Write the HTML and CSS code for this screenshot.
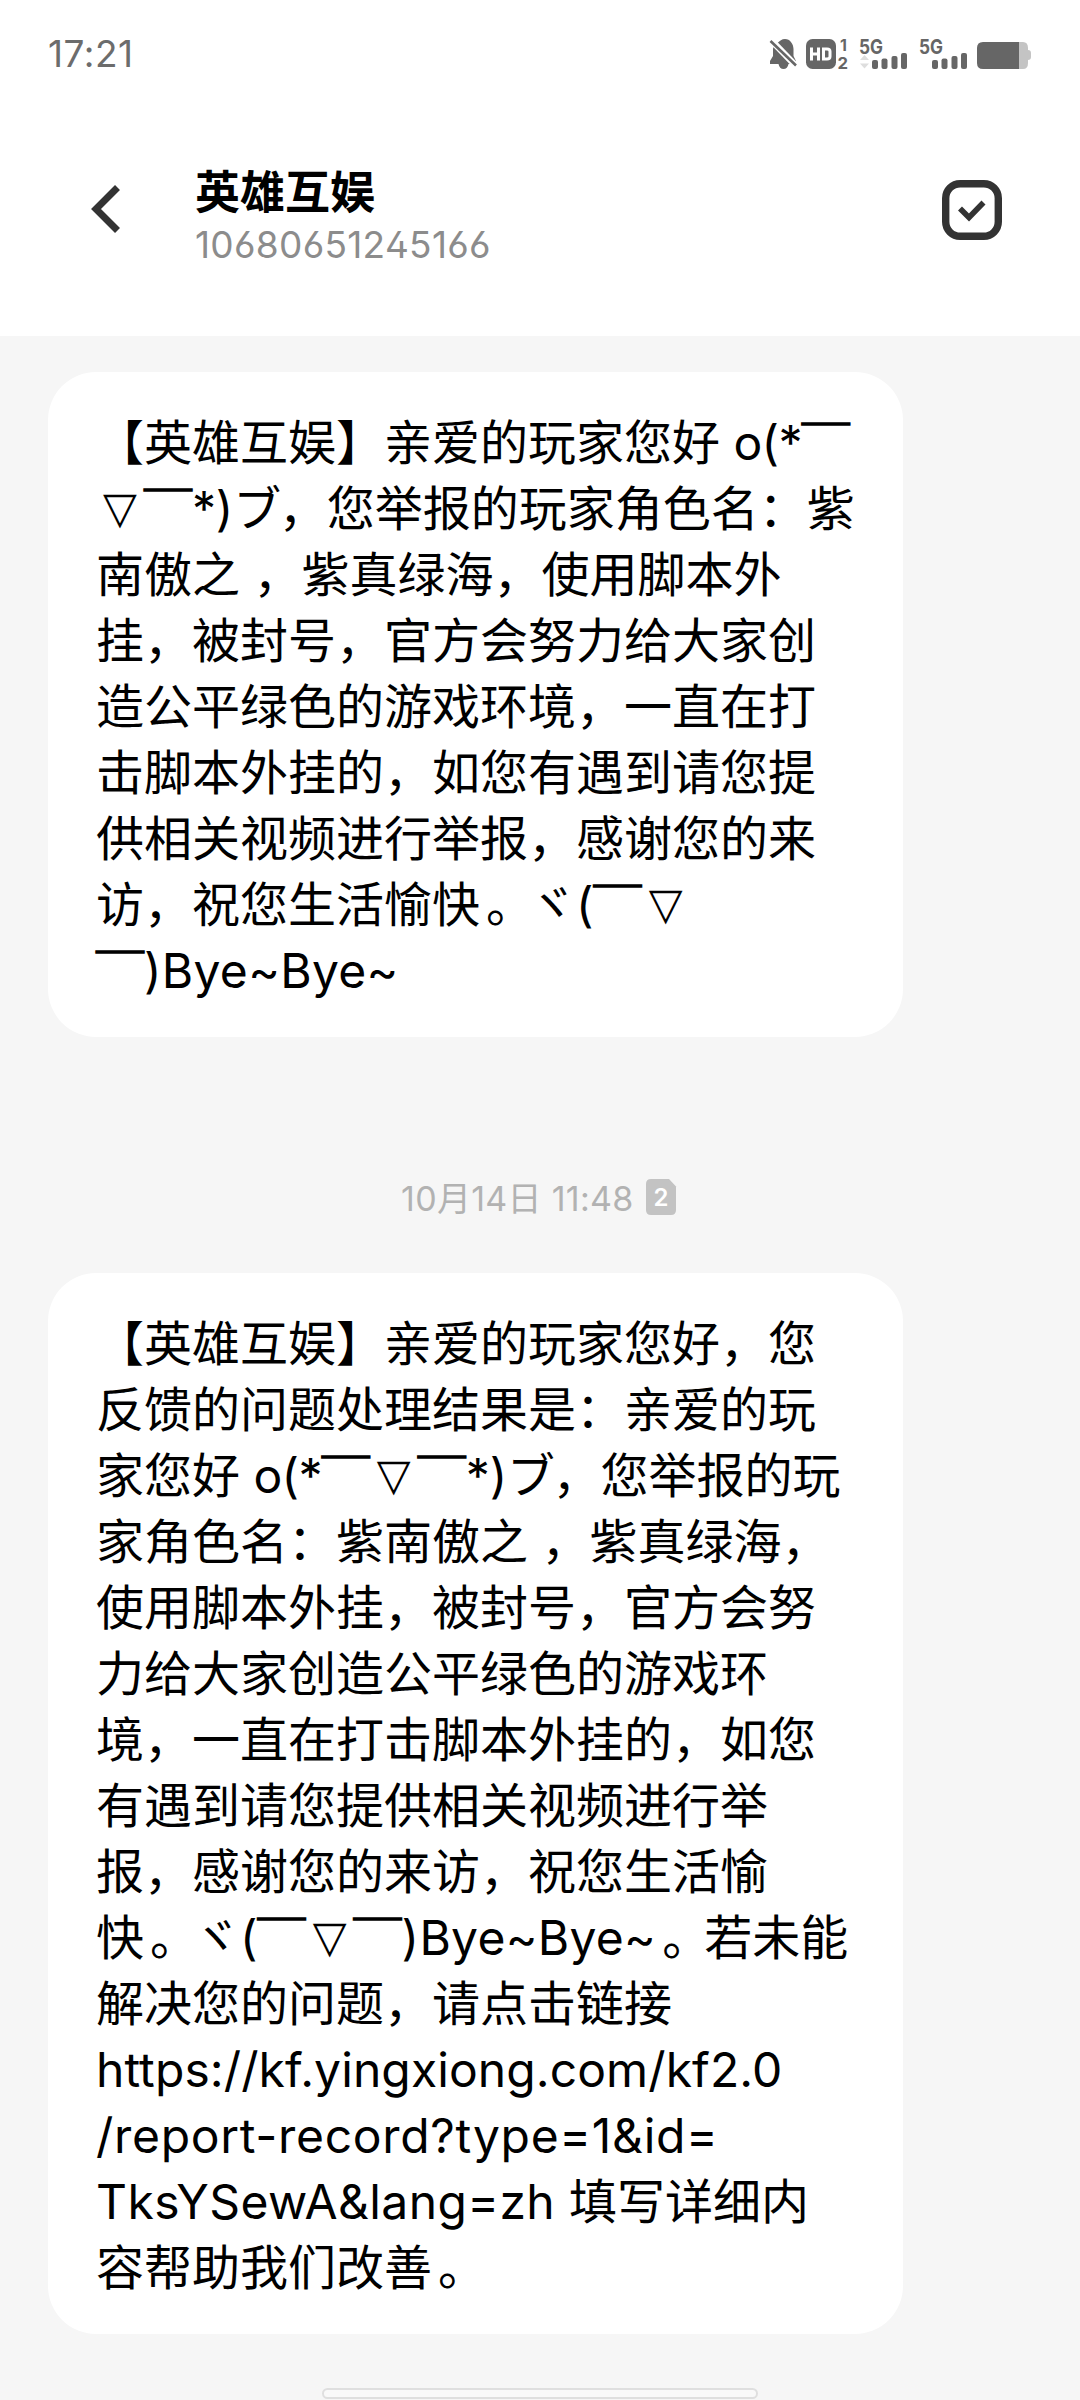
FILE: index.html
```html
<!DOCTYPE html>
<html lang="zh-CN">
<head>
<meta charset="utf-8">
<title>英雄互娱</title>
<link rel="stylesheet" href="styles.css">
</head>
<body>
<div class="screen">
  <header class="top">
    <div class="status">
      <span class="clock">17:21</span>
      <svg class="status-icons" width="264" height="34" viewBox="0 0 264 34">
        <g fill="#666">
          <path d="M7 7.500C10 4 13 2 16 2C21 2 24.500 7 24.500 12V19L27 24V27H19.500C19 30 17 32 14.500 32C12 32 10 30 9.500 27H1V24L4 19V12C4 10.500 5 9 7 7.500Z"/>
          <path d="M1 2L28 30" stroke="#fff" stroke-width="6.500"/>
          <path d="M1.500 4L27 28.500" stroke="#666" stroke-width="2.600"/>
          <rect x="37" y="2" width="30" height="30" rx="6.500"/>
          <path d="M42.500 10.500V23.500M42.500 17H49.500M49.500 10.500V23.500M54.500 12H58Q61 12 61 14.500V19.500Q61 22 58 22H54.500Z" fill="none" stroke="#fff" stroke-width="3"/>
          <text x="71" y="14" class="sim">1</text>
          <text x="68.500" y="32" class="sim" textLength="10.500" lengthAdjust="spacingAndGlyphs">2</text>
          <text x="90" y="16.500" class="net" textLength="24" lengthAdjust="spacingAndGlyphs">5G</text>
          <text x="150" y="16.500" class="net" textLength="24" lengthAdjust="spacingAndGlyphs">5G</text>
          <rect x="103" y="23" width="6" height="9" rx="2"/><rect x="112.500" y="21.500" width="6" height="10.500" rx="2"/><rect x="122.500" y="19" width="6" height="13" rx="2"/><rect x="132" y="16" width="6" height="16" rx="2"/>
          <rect x="163" y="23" width="6" height="9" rx="2"/><rect x="172.500" y="21.500" width="6" height="10.500" rx="2"/><rect x="182.500" y="19" width="6" height="13" rx="2"/><rect x="192" y="16" width="6" height="16" rx="2"/>
          <path d="M250 5H254Q259 5 259 11V13Q262 13 262 16V20Q262 23 259 23V26Q259 32 254 32H250Z" fill="#c4c4c4"/>
          <path d="M250 5H214Q208 5 208 11V26Q208 32 214 32H250Z"/>
        </g>
        <path d="M91 23L95.500 18L100 23ZM91 26.500L95.500 31.500L100 26.500Z" fill="#dedede"/>
      </svg>
    </div>
    <div class="bar">
      <svg class="back" width="32" height="50" viewBox="0 0 32 50"><path d="M27.500 3.500L6 25L27.500 46.500" fill="none" stroke="#333" stroke-width="7"/></svg>
      <div class="contact">
        <h1>英雄互娱</h1>
        <p>10680651245166</p>
      </div>
      <svg class="select" width="60" height="60" viewBox="0 0 60 60" fill="none" stroke="#333"><rect x="3.700" y="3.700" width="52.600" height="52.600" rx="14.500" stroke-width="7.400"/><path d="M18 28.500L27 37.500L41.500 22.500" stroke-width="5.600"/></svg>
    </div>
  </header>
  <main class="thread">
    <div class="bubble">
      <div>【英雄互娱】亲爱的玩家您好 <span class="a">o(*</span><i>￣</i></div>
      <div><b>▽</b><i>￣</i><span class="b">*)</span>ブ，您举报的玩家角色名：紫</div>
      <div>南傲之 ，紫真绿海，使用脚本外</div>
      <div>挂，被封号，官方会努力给大家创</div>
      <div>造公平绿色的游戏环境，一直在打</div>
      <div>击脚本外挂的，如您有遇到请您提</div>
      <div>供相关视频进行举报，感谢您的来</div>
      <div>访，祝您生活愉快<u>。</u>ヾ<span class="c">(</span><i>￣</i><b>▽</b></div>
      <div><i>￣</i><span class="d">)Bye~Bye~</span></div>
    </div>
    <div class="stamp"><span class="date">10月14日 11:48</span><svg width="30" height="36" viewBox="0 0 30 36"><path d="M5 0H23L30 7.500V31Q30 36 25 36H5Q0 36 0 31V5Q0 0 5 0Z" fill="#c3c3c3"/><text x="15" y="26.500" class="slot" text-anchor="middle">2</text></svg></div>
    <div class="bubble">
      <div>【英雄互娱】亲爱的玩家您好，您</div>
      <div>反馈的问题处理结果是：亲爱的玩</div>
      <div>家您好 <span class="a">o(*</span><i>￣</i><b>▽</b><i>￣</i><span class="b">*)</span>ブ，您举报的玩</div>
      <div>家角色名：紫南傲之 ，紫真绿海，</div>
      <div>使用脚本外挂，被封号，官方会努</div>
      <div>力给大家创造公平绿色的游戏环</div>
      <div>境，一直在打击脚本外挂的，如您</div>
      <div>有遇到请您提供相关视频进行举</div>
      <div>报，感谢您的来访，祝您生活愉</div>
      <div>快<u>。</u>ヾ<span class="c">(</span><i>￣</i><b>▽</b><i>￣</i><span class="d">)Bye~Bye~</span><u>。</u>若未能</div>
      <div>解决您的问题，请点击链接</div>
      <div><span class="e">https://kf.yingxiong.com/kf2.0</span></div>
      <div><span class="f">/report-record?type=1&amp;id=</span></div>
      <div><span class="g">TksYSewA&amp;lang=zh </span>填写详细内</div>
      <div>容帮助我们改善<u>。</u></div>
    </div>
    <div class="home"></div>
  </main>
</div>
</body>
</html>
```
FILE: styles.css
```css
* { box-sizing: border-box; margin: 0; padding: 0; }
body { width: 1080px; background: #f6f6f6; font-family: Inter, "Noto Sans CJK SC", sans-serif; color: #000; }
svg { display: block; flex: none; overflow: visible; }
.screen { height: 2400px; display: flex; flex-direction: column; overflow: hidden; }
.top { height: 336px; flex: none; background: #fff; }
.status { height: 108px; padding: 0 47px 0 48px; display: flex; align-items: center; justify-content: space-between; }
.clock { font-size: 37px; line-height: 44px; letter-spacing: .5px; color: #6c6c6c; font-feature-settings: "ss01"; }
.sim { font-size: 16px; font-weight: 700; }
.net { font-size: 20px; font-weight: 700; }
.bar { height: 204px; padding: 0 78px 0 90px; display: flex; align-items: center; }
.back { margin-bottom: 2px; }
.contact { flex: 1; padding: 13px 0 0 73px; }
.contact h1 { font-size: 45px; line-height: 56px; font-weight: 700; }
.contact p { font-size: 37px; line-height: 47px; letter-spacing: .3px; color: #8c8c8c; font-feature-settings: "ss01"; }
.thread { flex: 1; padding: 36px 48px 0; display: flex; flex-direction: column; }
.bubble { flex: none; width: 855px; padding: 38px 48px 33px; background: #fff; border-radius: 48px; font-size: 48px; line-height: 66px; }
.bubble div { height: 66px; white-space: pre; }
.bubble i { display: inline-block; height: 66px; vertical-align: top; padding-top: 5px; font-style: normal; -webkit-text-stroke: 1.5px #000; }
.bubble b { display: inline-block; width: 48px; height: 66px; vertical-align: top; text-align: center; font: 44px/64px "DejaVu Sans", sans-serif; }
.bubble u { text-decoration: none; padding-left: 6px; margin-right: -6px; }
.a { letter-spacing: -.7px; }
.b { letter-spacing: -.2px; }
.d { letter-spacing: .3px; }
.e { letter-spacing: .1px; }
.f { letter-spacing: .7px; }
.g { letter-spacing: .4px; }
.stamp { height: 236px; flex: none; padding: 142px 0 0 353px; display: flex; align-items: flex-start; gap: 12px; color: #b2b2b2; }
.date { font-size: 34px; line-height: 40px; letter-spacing: .3px; }
.slot { font-size: 24px; font-weight: 600; fill: #fff; }
.home { flex: none; width: 436px; height: 11px; margin: 54px auto 0; border: 2px solid #dfdfdf; border-radius: 6px; background: #f9f9f9; }
```
